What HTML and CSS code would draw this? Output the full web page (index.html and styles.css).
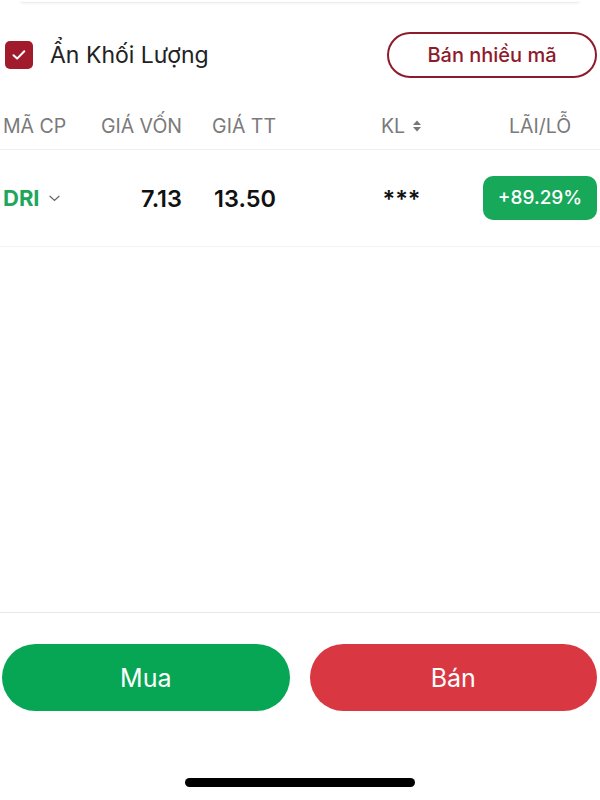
FILE: index.html
```html
<!DOCTYPE html>
<html lang="vi">
<head>
  <meta charset="UTF-8" />
  <meta name="viewport" content="width=device-width, initial-scale=1.0"/>
  <title>Danh mục</title>
  <link rel="stylesheet" href="styles.css">
</head>
<body>
  <div class="screen">
    <div class="card-edge"></div>

    <div class="toolbar">
      <label class="check">
        <span class="check-box">
          <svg width="18" height="18" viewBox="0 0 18 18"><path d="M3.5 9.2l3.6 3.4 7.2-7.4" fill="none" stroke="#fff" stroke-width="2" stroke-linecap="round" stroke-linejoin="round"/></svg>
        </span>
        <span class="check-label">Ẩn Khối Lượng</span>
      </label>
      <button class="btn-outline">Bán nhiều mã</button>
    </div>

    <div class="grid head">
      <div>MÃ CP</div>
      <div class="right">GIÁ VỐN</div>
      <div class="right">GIÁ TT</div>
      <div class="kl">KL
        <svg class="sort" width="10" height="14" viewBox="0 0 10 14"><path d="M5 1.5L9 6H1z M5 12.5L1 8h8z" fill="#777"/></svg>
      </div>
      <div class="center">LÃI/LỖ</div>
    </div>

    <div class="grid row">
      <div class="code">DRI
        <svg width="11" height="7" viewBox="0 0 11 7"><path d="M1 1.2l4.5 4.3L10 1.2" fill="none" stroke="#666" stroke-width="1.2" stroke-linecap="round"/></svg>
      </div>
      <div class="right num">7.13</div>
      <div class="right num">13.50</div>
      <div class="kl num">***</div>
      <div class="center"><span class="pill">+89.29%</span></div>
    </div>

    <div class="spacer"></div>

    <div class="actions">
      <button class="btn buy">Mua</button>
      <button class="btn sell">Bán</button>
    </div>

    <div class="home-bar"></div>
  </div>
</body>
</html>
```

FILE: styles.css
```css
body {
  margin: 0;
  background: #fff;
  font-family: Inter, "Noto Sans", sans-serif;
  color: #111;
}

.screen {
  width: 600px;
  height: 800px;
  display: flex;
  flex-direction: column;
  overflow: hidden;
}

.card-edge {
  height: 2px;
  margin: 0 20px;
  border-bottom: 1px solid #ececec;
  border-radius: 0 0 10px 10px;
  box-shadow: 0 1px 3px rgba(0, 0, 0, 0.04);
}

.toolbar {
  display: flex;
  justify-content: space-between;
  align-items: center;
  padding: 29px 3px 0 5px;
  height: 46px;
}

.check {
  display: flex;
  align-items: center;
  gap: 17px;
}

.check-box {
  width: 28px;
  height: 28px;
  border-radius: 5px;
  background: #a11b2d;
  display: flex;
  align-items: center;
  justify-content: center;
}

.check-label {
  font-size: 23px;
  color: #222;
}

.btn-outline {
  width: 210px;
  height: 46px;
  border: 2px solid #8e1b2c;
  border-radius: 23px;
  background: #fff;
  color: #8e1b2c;
  font-family: inherit;
  font-size: 20px;
  font-weight: 500;
}

.grid {
  display: grid;
  grid-template-columns: 87px 92px 94px 1fr 114px;
  align-items: center;
  padding: 0 3px;
}

.head {
  height: 46px;
  margin-top: 25px;
  border-bottom: 1px solid #efefef;
  font-size: 19.5px;
  color: #7a7a7a;
}

.row {
  height: 96px;
  border-bottom: 1px solid #f3f3f3;
}

.right {
  text-align: right;
}

.center {
  text-align: center;
}

.kl {
  padding-left: 44px;
  display: flex;
  justify-content: center;
  align-items: center;
  gap: 7px;
}

.code {
  display: flex;
  align-items: center;
  gap: 9px;
  font-size: 22px;
  font-weight: 700;
  color: #1ea75a;
}

.num {
  font-size: 23.5px;
  font-weight: 600;
  color: #111;
}

.pill {
  display: inline-block;
  width: 114px;
  height: 44px;
  line-height: 44px;
  border-radius: 10px;
  background: #17a85a;
  color: #fff;
  font-size: 19px;
  font-weight: 500;
}

.spacer {
  flex: 0 0 365px;
  border-bottom: 1px solid #e8e8e8;
}

.actions {
  display: grid;
  grid-template-columns: 1fr 1fr;
  gap: 20px;
  padding: 31px 3px 0 2px;
}

.btn {
  height: 67px;
  border: none;
  border-radius: 34px;
  color: #fff;
  font-family: inherit;
  font-size: 25px;
}

.buy {
  background: #07a654;
}

.sell {
  background: #d93843;
}

.home-bar {
  width: 230px;
  height: 9px;
  margin: 67px auto 0;
  border-radius: 5px;
  background: #000;
}
```
